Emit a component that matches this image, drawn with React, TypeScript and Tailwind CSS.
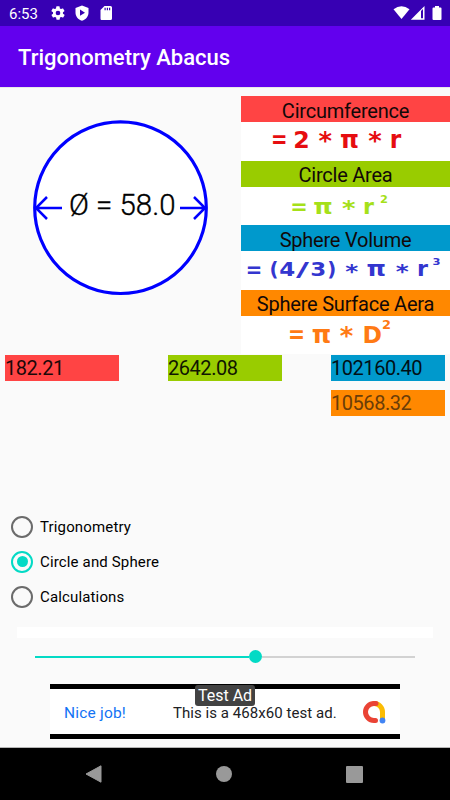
import React from 'react';

interface Glyph {
  char: string;
  x: number;
  y: number;
  size: number;
  width: number;
}

interface FormulaCard {
  title: string;
  bar: string;
  ink: string;
  glyphs: Glyph[];
}

const formulas: FormulaCard[] = [
  {
    title: 'Circumference',
    bar: 'bg-[#ff4444]',
    ink: 'fill-[#e60d10]',
    glyphs: [
      { char: '=', x: 38.2, y: 26, size: 25, width: 16.5 },
      { char: '2', x: 60.5, y: 25.7, size: 23.5, width: 16.5 },
      { char: '*', x: 84.3, y: 27.5, size: 24, width: 13.5 },
      { char: 'π', x: 108.5, y: 25.7, size: 24, width: 19 },
      { char: '*', x: 134, y: 27.5, size: 24, width: 13.5 },
      { char: 'r', x: 154.5, y: 25.7, size: 24, width: 11.5 },
    ],
  },
  {
    title: 'Circle Area',
    bar: 'bg-[#99cc00]',
    ink: 'fill-[#a5e019]',
    glyphs: [
      { char: '=', x: 58, y: 27.3, size: 22, width: 17.5 },
      { char: 'π', x: 82, y: 27.3, size: 22, width: 19.5 },
      { char: '*', x: 107.7, y: 29.5, size: 22, width: 13.5 },
      { char: 'r', x: 127.5, y: 27.3, size: 22, width: 11 },
      { char: '2', x: 143, y: 16.3, size: 11, width: 8 },
    ],
  },
  {
    title: 'Sphere Volume',
    bar: 'bg-[#0099cc]',
    ink: 'fill-[#3336cf]',
    glyphs: [
      { char: '=', x: 13, y: 26, size: 22, width: 16.5 },
      { char: '(', x: 33, y: 25.5, size: 19.6, width: 9 },
      { char: '4', x: 46.3, y: 25.5, size: 19.6, width: 16 },
      { char: '/', x: 61.5, y: 25.5, size: 19.6, width: 13 },
      { char: '3', x: 77.2, y: 25.5, size: 19.6, width: 16 },
      { char: ')', x: 90.7, y: 25.5, size: 19.6, width: 9 },
      { char: '*', x: 110.7, y: 27, size: 20, width: 13 },
      { char: 'π', x: 135.2, y: 25.5, size: 21, width: 19.5 },
      { char: '*', x: 161.3, y: 27, size: 20, width: 13 },
      { char: 'r', x: 181.5, y: 25.5, size: 21, width: 11 },
      { char: '3', x: 195.5, y: 14.5, size: 9, width: 8 },
    ],
  },
  {
    title: 'Sphere Surface Aera',
    bar: 'bg-[#ff8800]',
    ink: 'fill-[#ff7a14]',
    glyphs: [
      { char: '=', x: 55.5, y: 27.5, size: 24, width: 17 },
      { char: 'π', x: 80.5, y: 27.3, size: 24, width: 19.5 },
      { char: '*', x: 105.5, y: 28.5, size: 24, width: 13.5 },
      { char: 'D', x: 131.2, y: 27.3, size: 23.6, width: 19.5 },
      { char: '2', x: 145.5, y: 13.3, size: 12, width: 9 },
    ],
  },
];

const results = [
  { value: '182.21', style: 'bg-[#ff4444] text-[#1b0808]' },
  { value: '2642.08', style: 'bg-[#99cc00] text-[#101600]' },
  { value: '102160.40', style: 'bg-[#0099cc] text-[#001016]' },
];

const modes = ['Trigonometry', 'Circle and Sphere', 'Calculations'];

const StatusBar: React.FC = () => (
  <header className="flex h-[26px] items-center bg-[#3700b3] pl-[9px] pr-2 text-white">
    <span className="w-[30px] text-[15px] leading-none mt-[3px]">6:53</span>
    <svg className="ml-[11px] size-4" viewBox="0 0 24 24" fill="currentColor">
      <path d="M19.4 13a7.5 7.5 0 0 0 0-2l2.1-1.6a.5.5 0 0 0 .1-.7l-2-3.400a.5.5 0 0 0-.6-.2l-2.500 1a7 7 0 0 0-1.700-1l-.4-2.600a.5.5 0 0 0-.5-.5h-4a.5.5 0 0 0-.5.5l-.4 2.600a7 7 0 0 0-1.700 1l-2.500-1a.5.5 0 0 0-.6.2l-2 3.400a.5.5 0 0 0 .1.700L4.600 11a7.500 7.500 0 0 0 0 2l-2.100 1.600a.5.5 0 0 0-.1.700l2 3.400c.1.200.4.300.6.200l2.500-1a7 7 0 0 0 1.700 1l.4 2.600c0 .300.200.500.500.500h4c.300 0 .500-.2.500-.5l.4-2.600a7 7 0 0 0 1.700-1l2.500 1c.200.1.500 0 .6-.2l2-3.400a.5.5 0 0 0-.1-.7L19.400 13zM12 15.500a3.500 3.500 0 1 1 0-7 3.500 3.500 0 0 1 0 7z" />
    </svg>
    <svg className="ml-2 size-4" viewBox="0 0 16 16" fill="currentColor" fillRule="evenodd">
      <path d="M8 .5 14.500 3v4.500c0 4-2.700 7-6.500 8.200C4.200 14.500 1.500 11.500 1.500 7.500V3zM6 4.600v6.200l5-3.100z" />
    </svg>
    <svg className="ml-2 size-4" viewBox="0 0 16 16" fill="currentColor" fillRule="evenodd">
      <path d="M6.500 1H12.500Q14 1 14 2.500v11Q14 15 12.500 15h-9Q2.500 15 2.500 13.500V5zM6.500 2.700v2.500h1.200V2.700zM8.800 2.700v2.500H10V2.700zM11 2.700v2.500h1.200V2.700z" />
    </svg>
    <div className="ml-auto flex items-center">
      <svg className="h-4 w-[17px]" viewBox="0 0 17 16" fill="currentColor">
        <path d="M.5 4.300Q8.500-1.800 16.500 4.300L8.500 14z" />
      </svg>
      <svg className="h-4 w-[15px]" viewBox="0 0 15 16" fill="currentColor" fillRule="evenodd">
        <path d="M.8 14.800 14.500 1v13.800zM11 6v7.300h2V4z" />
      </svg>
      <svg className="ml-[7px] h-4 w-[10px]" viewBox="0 0 10 16" fill="currentColor">
        <path d="M3 1h4v1.500h1.500q1 0 1 1V14q0 1-1 1h-7q-1 0-1-1V3.500q0-1 1-1H3z" />
      </svg>
    </div>
  </header>
);

const CircleFigure: React.FC = () => (
  <svg className="mt-8 ml-[32px] h-[176px] w-[177px] shrink-0" viewBox="0 0 177 176">
    <circle cx="88.500" cy="87.700" r="85.800" fill="#fff" stroke="#0000ff" strokeWidth="3.200" />
    <g fill="none" stroke="#0000ff" strokeWidth="2.500">
      <path d="M3 88H30M15 77 4 88l11 11" />
      <path d="M148 88h27M162 77l11 11-11 11" />
    </g>
    <text
      x="37"
      y="95"
      textLength="106.500"
      lengthAdjust="spacingAndGlyphs"
      strokeWidth="0.350"
      className="fill-black stroke-black font-[Roboto] text-[29px] font-light"
    >
      Ø = 58.0
    </text>
  </svg>
);

const Formula: React.FC<{ card: FormulaCard }> = ({ card }) => (
  <div className="flex h-[64.6px] flex-col">
    <h2 className={`flex h-[26px] shrink-0 items-center justify-center text-[20px] tracking-[-0.22px] text-[#120808] ${card.bar}`}>
      <span className="mt-[3px]">{card.title}</span>
    </h2>
    <svg className="h-[38.6px] w-[209px] bg-white" viewBox="0 0 209 38.6">
      {card.glyphs.map((g, i) => (
        <text
          key={i}
          x={g.x}
          y={g.y}
          fontSize={g.size}
          textLength={g.width}
          lengthAdjust="spacingAndGlyphs"
          textAnchor="middle"
          className={`font-['DejaVu_Sans',sans-serif] font-bold ${card.ink}`}
        >
          {g.char}
        </text>
      ))}
    </svg>
  </div>
);

const RadioRow: React.FC<{ label: string; checked: boolean }> = ({ label, checked }) => (
  <label className="flex h-[35px] items-center">
    <span
      className={`flex size-[22px] items-center justify-center rounded-full border-2 ${
        checked ? 'border-[#03dac5]' : 'border-[#6b6b6b]'
      }`}
    >
      {checked && <span className="size-[11px] rounded-full bg-[#03dac5]" />}
    </span>
    <span className="ml-[7px] mt-[2px] text-[15px] tracking-[0.15px] text-black">{label}</span>
  </label>
);

const AdBanner: React.FC = () => (
  <div className="relative mx-[50px] mt-[21px] flex h-[55px] items-center border-y-[5px] border-black bg-white pl-[14px] leading-4">
    <span className="mt-[2px] w-[109px] text-[15.5px] tracking-[0.2px] text-[#1273f5]">Nice job!</span>
    <span className="mt-[2px] w-[189px] whitespace-nowrap text-[15px] tracking-[0.05px] text-[#202124]">This is a 468x60 test ad.</span>
    <svg className="mt-[1px] h-6 w-6" viewBox="0 0 24 24" fill="none" strokeWidth="5" strokeLinecap="round">
      <path d="M12 3.500a8.500 8.500 0 0 1 8.500 8.500V20" stroke="#fbbc04" />
      <path d="M14 3.500H12a8.500 8.500 0 0 0 0 17h1.500" stroke="#ea4335" />
      <circle cx="20.500" cy="20.500" r="2.900" fill="#4285f4" />
    </svg>
    <span className="absolute left-[145px] -top-[4px] flex h-[21px] w-[60px] items-center justify-center rounded-[3px] bg-[#424242] text-[16px] text-white">
      Test Ad
    </span>
  </div>
);

const App: React.FC = () => {
  return (
    <div className="flex h-[800px] w-[450px] flex-col overflow-hidden bg-[#fafafa] font-[Roboto,sans-serif]">
      <StatusBar />
      <div className="flex h-[61px] items-center bg-[#6200ee] pl-[18px]">
        <h1 className="mt-[2px] text-[22px] font-medium text-white">Trigonometry Abacus</h1>
      </div>
      <main className="flex h-[661px] flex-col border-b border-t border-b-[#b5b5b5] border-t-[#e8e8e8]">
        <section className="flex h-[266px] justify-between">
          <CircleFigure />
          <div className="mt-2 w-[209px]">
            {formulas.map(card => (
              <Formula key={card.title} card={card} />
            ))}
          </div>
        </section>
        <section className="flex justify-between px-[5px] pt-[1px] text-[20px] leading-[27px] tracking-[-0.45px]">
          {results.map(r => (
            <div key={r.value} className={`h-[26px] w-[114px] ${r.style}`}>
              {r.value}
            </div>
          ))}
        </section>
        <div className="mr-[5px] mt-[9px] h-[26px] w-[114px] self-end bg-[#ff8800] text-[20px] leading-[27px] tracking-[-0.45px] text-[#6b3d08]">
          10568.32
        </div>
        <section className="mt-[93px] pl-[11px]">
          {modes.map(mode => (
            <RadioRow key={mode} label={mode} checked={mode === 'Circle and Sphere'} />
          ))}
        </section>
        <div className="mx-[17px] mt-[13px] h-[11px] bg-white" />
        <div className="mx-[35px] mt-[12px] flex h-[13px] items-center">
          <div className="h-[2px] w-[214px] bg-[#03dac5]" />
          <div className="size-[13px] rounded-full bg-[#03dac5]" />
          <div className="h-[2px] flex-1 bg-[#d2d2d2]" />
        </div>
        <AdBanner />
      </main>
      <nav className="flex h-[52px] items-center justify-between bg-black pl-[85px] pr-[87px]">
        <svg className="h-[18px] w-[17px]" viewBox="0 0 17 18">
          <path d="M16 .8v16.400L1 9z" fill="#999" stroke="#999" strokeLinejoin="round" />
        </svg>
        <div className="size-[16px] rounded-full bg-[#999]" />
        <div className="size-[17px] rounded-[1px] bg-[#999]" />
      </nav>
    </div>
  );
};

export default App;
